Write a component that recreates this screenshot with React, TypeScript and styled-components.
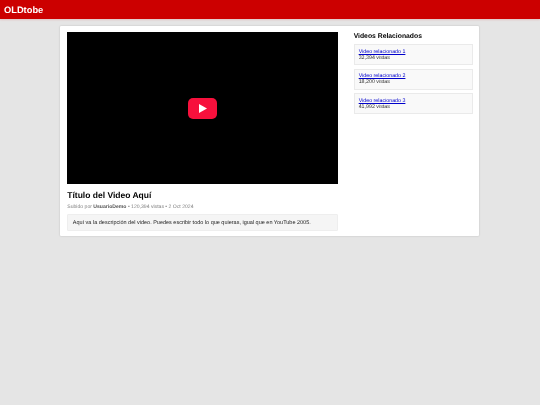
import styled, { createGlobalStyle } from 'styled-components';

const GlobalStyle = createGlobalStyle`
  html, body {
    margin: 0;
    padding: 0;
    background: #e5e5e5;
    font-family: "Liberation Sans", Arial, sans-serif;
    color: #000;
    text-rendering: geometricPrecision;
  }
`;

const Shell = styled.div`
  min-height: 405px;
  filter: blur(0.3px);
  overflow: hidden;
`;

const Header = styled.header`
  height: 19px;
  background: #cc0000;
  box-shadow: 0 1px 2px rgba(204, 0, 0, 0.15);
  padding: 0 4px;
  display: flex;
  align-items: center;
  color: #fff;
  font-size: 9.3px;
  font-weight: 700;
`;

const Page = styled.main`
  width: 418.6px;
  margin: 7px 0 0 60.4px;
  box-sizing: border-box;
  padding: 6px 6px 5px 6.9px;
  background: #fff;
  border-radius: 1px;
  box-shadow: 0 0 2px rgba(0, 0, 0, 0.2);
  display: flex;
  gap: 16px;
`;

const Main = styled.section`
  width: 270.4px;
  flex: none;
`;

const Player = styled.div`
  height: 152px;
  background: #000;
  display: flex;
  align-items: center;
  justify-content: center;
`;

const Title = styled.h1`
  margin: 5px 0 0;
  font-size: 8.5px;
  line-height: 12px;
  font-weight: 700;
`;

const Meta = styled.p`
  margin: 3px 0 0;
  font-size: 5.1px;
  line-height: 7px;
  color: #808080;

  strong {
    color: #555;
  }
`;

const Description = styled.div`
  margin-top: 3px;
  padding: 3.500px 4.500px;
  background: #f5f5f5;
  border: 0.5px solid #eee;
  border-radius: 1px;
  font-size: 5.5px;
  line-height: 8px;
  color: #222;
`;

const Sidebar = styled.aside`
  flex: 1;
`;

const SideTitle = styled.h2`
  margin: 0 0 5px;
  padding-top: 1px;
  height: 6px;
  font-size: 6.8px;
  line-height: 7px;
  font-weight: 700;
`;

const Related = styled.div`
  height: 21px;
  box-sizing: border-box;
  margin-bottom: 3.5px;
  padding: 3.5px 4px;
  background: #f9f9f9;
  border: 0.5px solid #eaeaea;
  font-size: 5.3px;
  line-height: 6.2px;
  color: #333;

  a {
    display: block;
    color: #0000cc;
    text-decoration: underline;
    text-decoration-thickness: 0.5px;
    text-underline-offset: 0.5px;
  }
`;

const related = [
  { title: 'Video relacionado 1', views: '32,394 vistas' },
  { title: 'Video relacionado 2', views: '18,200 vistas' },
  { title: 'Video relacionado 3', views: '41,992 vistas' },
];

export default function App() {
  return (
    <Shell>
      <GlobalStyle />
      <Header>OLDtobe</Header>
      <Page>
        <Main>
          <Player>
            <svg width="29" height="21" viewBox="0 0 29 21">
              <rect width="29" height="21" rx="5" fill="#f7103c" />
              <path d="M11 6l8 4.5-8 4.500z" fill="#fff" />
            </svg>
          </Player>
          <Title>Título del Video Aquí</Title>
          <Meta>
            Subido por <strong>UsuarioDemo</strong> • 120,394 vistas • 2 Oct 2024
          </Meta>
          <Description>
            Aquí va la descripción del video. Puedes escribir todo lo que quieras, igual que en YouTube 2005.
          </Description>
        </Main>
        <Sidebar>
          <SideTitle>Videos Relacionados</SideTitle>
          {related.map((item) => (
            <Related key={item.title}>
              <a href="#">{item.title}</a>
              {item.views}
            </Related>
          ))}
        </Sidebar>
      </Page>
    </Shell>
  );
}
